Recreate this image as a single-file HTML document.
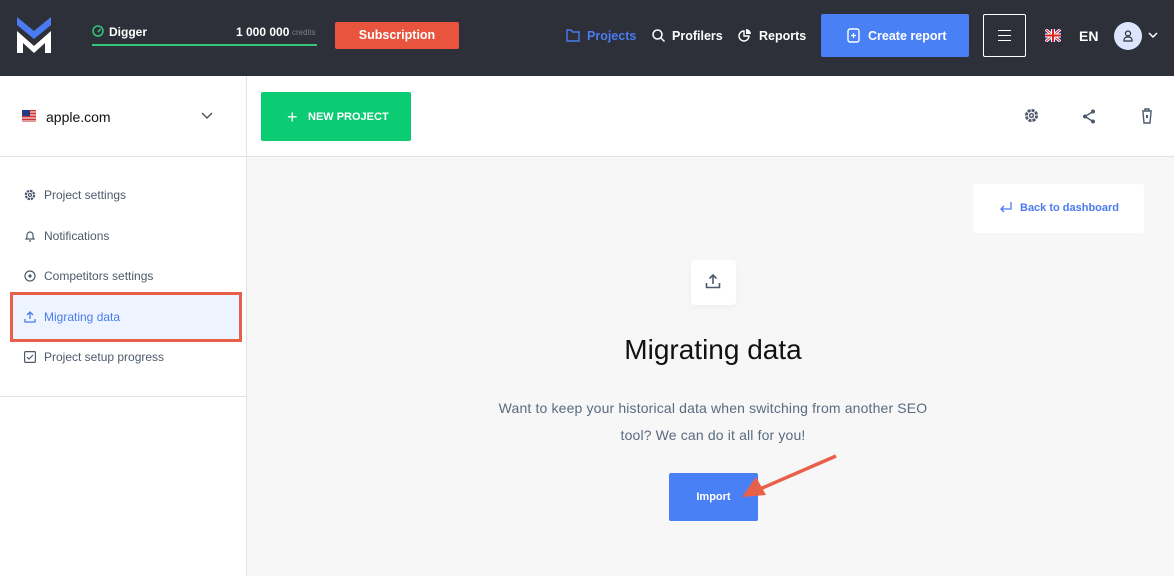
<!DOCTYPE html>
<html><head><meta charset="utf-8"><style>
*{box-sizing:border-box;margin:0;padding:0}
body{width:1174px;height:576px;overflow:hidden;font-family:"Liberation Sans",sans-serif;background:#f7f7f7;position:relative}
.a{position:absolute}
.hdr{left:0;top:0;width:1174px;height:76px;background:#2d3039}
.w{color:#fff;font-weight:bold;font-size:12.5px}
.side{left:0;top:76px;width:247px;height:500px;background:#fff;border-right:1px solid #e2e2e2}
.top{left:247px;top:76px;width:927px;height:81px;background:#fff;border-bottom:1px solid #e2e2e2}
.mi{left:24px;font-size:12px;color:#4d5a6b;display:flex;align-items:center;gap:8px}
</style></head><body>
<div class="a hdr"></div>
<svg class="a" style="left:17px;top:17px" width="34" height="37" viewBox="0 0 34 37"><polygon points="0,0 17,14 34,0 34,8 17,22 0,8" fill="#4a7bf0"/><polygon points="0,14 17,29 34,14 34,36 28,36 28,26 17,36 6,26 6,36 0,36" fill="#fff"/></svg>
<svg class="a" style="left:92px;top:25px" width="12" height="12" viewBox="0 0 12 12"><circle cx="6" cy="6" r="5" fill="none" stroke="#34c77b" stroke-width="1.5"/><path d="M6 7L8.5 4" stroke="#34c77b" stroke-width="1.5"/></svg>
<div class="a w" style="left:109px;top:25px;font-size:12px">Digger</div>
<div class="a w" style="left:236px;top:25px;font-size:12px">1 000 000</div>
<div class="a" style="left:292px;top:28px;font-size:8px;color:#7a7f8a">credits</div>
<div class="a" style="left:92px;top:44px;width:225px;height:2px;background:#34c77b"></div>
<div class="a w" style="left:335px;top:22px;width:124px;height:27px;background:#e9543f;border-radius:2px;text-align:center;line-height:27px">Subscription</div>
<svg class="a" style="left:566px;top:29px" width="14" height="13" viewBox="0 0 14 13"><path d="M1 1h4l1.5 2H13v9H1z" fill="none" stroke="#4a7bf0" stroke-width="1.4"/></svg>
<div class="a" style="left:587px;top:29px;color:#4a7bf0;font-weight:bold;font-size:12.5px">Projects</div>
<svg class="a" style="left:652px;top:29px" width="13" height="13" viewBox="0 0 13 13"><circle cx="5.5" cy="5.5" r="4.5" fill="none" stroke="#fff" stroke-width="1.5"/><path d="M9 9l3.5 3.5" stroke="#fff" stroke-width="1.5"/></svg>
<div class="a w" style="left:672px;top:29px">Profilers</div>
<svg class="a" style="left:738px;top:29px" width="13" height="13" viewBox="0 0 13 13"><path d="M6 2a5 5 0 1 0 5 5H6z" fill="none" stroke="#fff" stroke-width="1.4"/><path d="M8 0v5h5A5 5 0 0 0 8 0z" fill="#fff"/></svg>
<div class="a w" style="left:759px;top:29px">Reports</div>
<div class="a" style="left:821px;top:14px;width:148px;height:43px;background:#4a80f6;border-radius:2px"></div>
<svg class="a" style="left:847px;top:28px" width="13" height="15" viewBox="0 0 13 15"><rect x="1" y="1" width="11" height="13" rx="2" fill="none" stroke="#fff" stroke-width="1.4"/><path d="M6.5 5v5M4 7.5h5" stroke="#fff" stroke-width="1.2"/></svg>
<div class="a w" style="left:868px;top:29px">Create report</div>
<div class="a" style="left:983px;top:14px;width:43px;height:43px;border:1px solid #fff;border-radius:2px"></div>
<div class="a" style="left:998px;top:30px;width:13px;height:1px;background:#fff;box-shadow:0 5px 0 #fff,0 10px 0 #fff"></div>
<svg class="a" style="left:1045px;top:29px" width="16" height="13" viewBox="0 0 16 13"><rect width="16" height="13" fill="#24357a"/><path d="M0 0L16 13M16 0L0 13" stroke="#fff" stroke-width="3"/><path d="M0 0L16 13M16 0L0 13" stroke="#d22" stroke-width="1"/><path d="M8 0v13M0 6.5h16" stroke="#fff" stroke-width="4"/><path d="M8 0v13M0 6.5h16" stroke="#d22" stroke-width="2"/></svg>
<div class="a w" style="left:1079px;top:28px;font-size:14px">EN</div>
<div class="a" style="left:1114px;top:22px;width:28px;height:28px;border-radius:50%;background:#dbe5fb"></div>
<svg class="a" style="left:1123px;top:30px" width="10" height="12" viewBox="0 0 10 12"><circle cx="5" cy="3.5" r="2.5" fill="none" stroke="#2d3039" stroke-width="1.2"/><path d="M1 11v-1a3 3 0 0 1 3-3h2a3 3 0 0 1 3 3v1z" fill="none" stroke="#2d3039" stroke-width="1.2"/></svg>
<svg class="a" style="left:1148px;top:32px" width="10" height="7" viewBox="0 0 10 7"><path d="M1 1l4 4 4-4" fill="none" stroke="#fff" stroke-width="1.5"/></svg>

<div class="a side"></div>
<div class="a top"></div>
<div class="a" style="left:0;top:156px;width:247px;height:1px;background:#e2e2e2"></div>
<div class="a" style="left:0;top:396px;width:247px;height:1px;background:#e2e2e2"></div>
<svg class="a" style="left:22px;top:110px" width="14" height="12" viewBox="0 0 14 12"><rect width="14" height="12" fill="#c33"/><path d="M0 2h14M0 5h14M0 8h14M0 11h14" stroke="#fff" stroke-width="1"/><rect width="8" height="6" fill="#2a3a80"/></svg>
<div class="a" style="left:46px;top:109px;font-size:14px;color:#111">apple.com</div>
<svg class="a" style="left:201px;top:112px" width="12" height="8" viewBox="0 0 12 8"><path d="M1 1l5 5 5-5" fill="none" stroke="#556" stroke-width="1.5"/></svg>
<div class="a" style="left:261px;top:92px;width:150px;height:49px;background:#0bcb73;border-radius:2px"></div>
<div class="a w" style="left:287px;top:107px;font-size:18px;font-weight:normal">+</div>
<div class="a w" style="left:308px;top:111px;font-size:11px">NEW PROJECT</div>
<svg class="a" style="left:1024px;top:108px" width="15" height="15" viewBox="0 0 16 16"><circle cx="8" cy="8" r="5.5" fill="none" stroke="#4d5a6b" stroke-width="3" stroke-dasharray="3.2 1.1"/><circle cx="8" cy="8" r="2" fill="none" stroke="#4d5a6b" stroke-width="1.6"/></svg>
<svg class="a" style="left:1082px;top:109px" width="14" height="15" viewBox="0 0 14 15"><circle cx="11" cy="2.5" r="2" fill="#4d5a6b"/><circle cx="3" cy="7.5" r="2" fill="#4d5a6b"/><circle cx="11" cy="12.5" r="2" fill="#4d5a6b"/><path d="M11 2.5L3 7.5 11 12.5" fill="none" stroke="#4d5a6b" stroke-width="1.4"/></svg>
<svg class="a" style="left:1141px;top:108px" width="12" height="16" viewBox="0 0 12 16"><path d="M1 3h10M4 3V1h4v2M2 4l1 11h6l1-11" fill="none" stroke="#4d5a6b" stroke-width="1.4"/><rect x="5" y="7" width="2" height="3" fill="#4d5a6b"/></svg>

<div class="a mi" style="top:188px"><svg width="12" height="12" viewBox="0 0 16 16"><circle cx="8" cy="8" r="5.5" fill="none" stroke="#4d5a6b" stroke-width="3" stroke-dasharray="3.2 1.1"/><circle cx="8" cy="8" r="2" fill="none" stroke="#4d5a6b" stroke-width="1.6"/></svg>Project settings</div>
<div class="a mi" style="top:229px"><svg width="12" height="12" viewBox="0 0 12 12"><path d="M2 9h8L9 7.5V5a3 3 0 0 0-6 0v2.5zM5 11h2" fill="none" stroke="#4d5a6b" stroke-width="1.2"/></svg>Notifications</div>
<div class="a mi" style="top:269px"><svg width="12" height="12" viewBox="0 0 12 12"><circle cx="6" cy="6" r="5" fill="none" stroke="#4d5a6b" stroke-width="1.2"/><circle cx="6" cy="6" r="1.6" fill="#4d5a6b"/></svg>Competitors settings</div>
<div class="a" style="left:10px;top:292px;width:232px;height:50px;border:3px solid #e9604a;background:#eef4ff"></div>
<div class="a mi" style="top:310px;color:#4a7bf0"><svg width="12" height="12" viewBox="0 0 12 12"><path d="M6 8V1M3 4l3-3 3 3M1 8v3h10V8" fill="none" stroke="#4a7bf0" stroke-width="1.3"/></svg>Migrating data</div>
<div class="a mi" style="top:350px"><svg width="12" height="12" viewBox="0 0 12 12"><rect x="0.6" y="0.6" width="10.8" height="10.8" rx="1" fill="none" stroke="#4d5a6b" stroke-width="1.2"/><path d="M3 6l2 2 4-4" fill="none" stroke="#4d5a6b" stroke-width="1.2"/></svg>Project setup progress</div>

<div class="a" style="left:973px;top:184px;width:171px;height:49px;background:#fff;border-radius:3px"></div>
<svg class="a" style="left:1000px;top:202px" width="12" height="12" viewBox="0 0 12 12"><path d="M11 0v7H1M4 4L1 7l3 3" fill="none" stroke="#4a7bf0" stroke-width="1.3"/></svg>
<div class="a" style="left:1020px;top:202px;font-size:11px;font-weight:bold;color:#4a7bf0">Back to dashboard</div>

<div class="a" style="left:691px;top:260px;width:45px;height:45px;background:#fff;border-radius:4px;box-shadow:0 3px 8px rgba(0,0,0,.04)"></div>
<svg class="a" style="left:705px;top:274px" width="16" height="15" viewBox="0 0 16 15"><path d="M8 10V1M4.5 4.5L8 1l3.5 3.5M1.5 9v4.5h13V9" fill="none" stroke="#4d5a6b" stroke-width="1.6"/></svg>
<div class="a" style="left:500px;top:334px;width:426px;text-align:center;font-size:28px;color:#111">Migrating data</div>
<div class="a" style="left:488px;top:395px;width:450px;text-align:center;font-size:14px;letter-spacing:.15px;line-height:27px;color:#5a6b80">Want to keep your historical data when switching from another SEO tool? We can do it all for you!</div>
<div class="a w" style="left:669px;top:473px;width:89px;height:48px;background:#4a80f6;border-radius:2px;text-align:center;line-height:48px;font-size:11px">Import</div>
<svg class="a" style="left:735px;top:450px" width="110" height="52"><path d="M101 6L25 39" stroke="#e9604a" stroke-width="3.5"/><polygon points="7,47 21,27 31,45" fill="#e9604a"/></svg>
</body></html>
